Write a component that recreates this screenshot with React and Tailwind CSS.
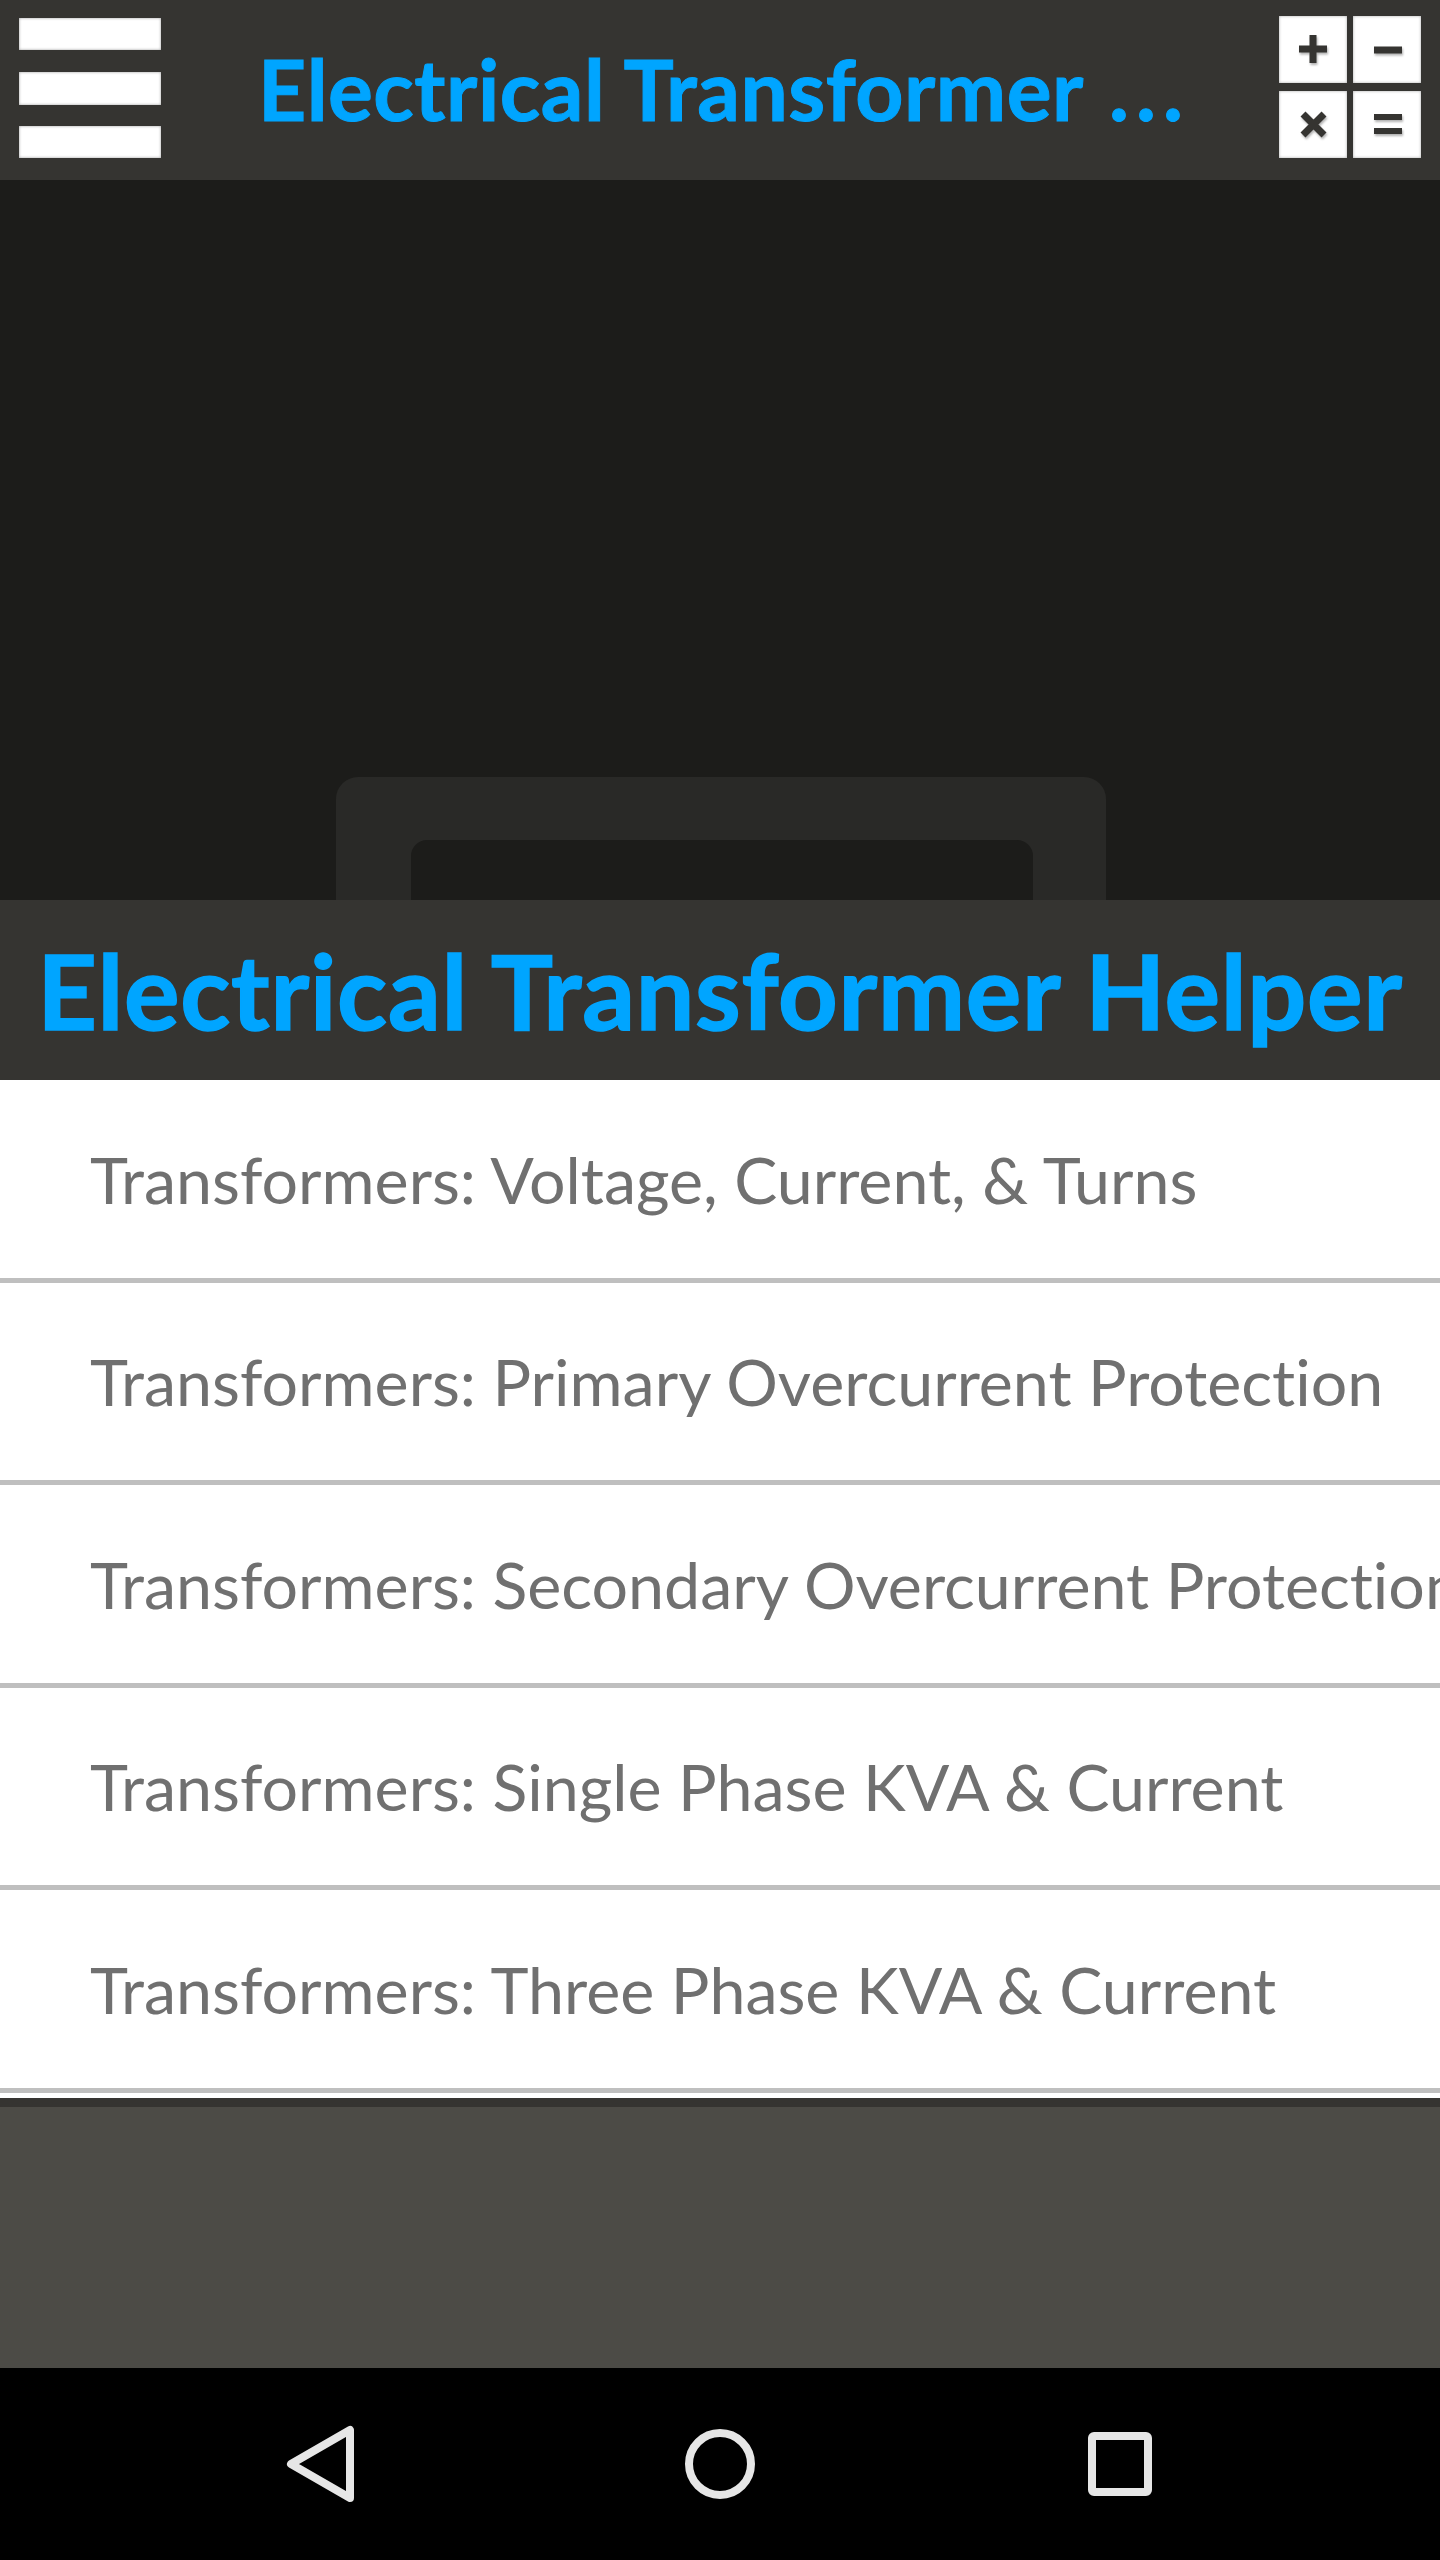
import React from 'react';

const rows = [
  'Transformers: Voltage, Current, & Turns',
  'Transformers: Primary Overcurrent Protection',
  'Transformers: Secondary Overcurrent Protection',
  'Transformers: Single Phase KVA & Current',
  'Transformers: Three Phase KVA & Current',
];

function CalcKey({ children }) {
  return (
    <div className="w-[68px] h-[67px] bg-white shadow-[inset_0_0_3px_rgba(0,0,0,0.35)]">
      <svg width="68" height="67" viewBox="0 0 68 67" className="drop-shadow-[1px_2px_1px_rgba(0,0,0,0.3)]" stroke="#353431" fill="none">
        {children}
      </svg>
    </div>
  );
}

export default function App() {
  return (
    <div className="w-[1440px] h-[2560px] flex flex-col overflow-hidden bg-[#4c4b46] font-['Lato',sans-serif] [font-variant-ligatures:none]">
      {/* Top bar */}
      <div className="h-[180px] shrink-0 flex items-center bg-[#353431] pl-[19px] pr-[19px]">
        <div className="flex flex-col gap-[21.5px] w-[142px] -mt-[4px]">
          <div className="h-[32px] bg-white shadow-[inset_0_0_3px_rgba(0,0,0,0.4)]" />
          <div className="h-[33px] bg-white shadow-[inset_0_0_3px_rgba(0,0,0,0.4)]" />
          <div className="h-[32px] bg-white shadow-[inset_0_0_3px_rgba(0,0,0,0.4)]" />
        </div>
        <div className="ml-[97px] flex-1 whitespace-nowrap font-bold text-[#00a5ff] text-[84px] tracking-[0.5px] leading-none -mt-[2px] [-webkit-text-stroke:1px_#00a5ff]">
          Electrical Transformer <span className="ml-[6px] tracking-[7px]">...</span>
        </div>
        <div className="grid grid-cols-[68px_68px] grid-rows-[67px_67px] gap-x-[6px] gap-y-[8px] -mt-[6px]">
          <CalcKey>
            <path d="M20 33H48M34 19V47" strokeWidth="7" />
          </CalcKey>
          <CalcKey>
            <path d="M21 34H49" strokeWidth="7" />
          </CalcKey>
          <CalcKey>
            <path d="M24 23L45 44M45 23L24 44" strokeWidth="7" />
          </CalcKey>
          <CalcKey>
            <path d="M21 26H49M21 40H49" strokeWidth="6" />
          </CalcKey>
        </div>
      </div>

      {/* Hero */}
      <div className="h-[720px] shrink-0 overflow-hidden bg-[#1c1c1a] flex justify-center pt-[597px] pl-[1px]">
        <div className="w-[770px] h-[300px] shrink-0 rounded-t-[22px] bg-[#292927] flex justify-center pt-[63px] pl-[3px]">
          <div className="w-[622px] h-[200px] rounded-t-[16px] bg-[#1c1c1a]" />
        </div>
      </div>

      {/* Title */}
      <div className="h-[180px] shrink-0 flex items-center justify-center bg-[#353431]">
        <h1 className="whitespace-nowrap font-bold text-[#00a5ff] text-[104px] tracking-[0.7px] leading-none [-webkit-text-stroke:1.5px_#00a5ff]">
          Electrical Transformer Helper
        </h1>
      </div>

      {/* List */}
      <div className="shrink-0 bg-white">
        {rows.map((row) => (
          <div
            key={row}
            className="h-[202.5px] flex items-center overflow-hidden border-b-[5px] border-[#bfbfbf] pl-[90px]"
          >
            <span className="whitespace-nowrap text-[64.5px] leading-none text-[#707070]">{row}</span>
          </div>
        ))}
      </div>
      <div className="h-[5px] shrink-0 bg-white" />
      <div className="h-[9px] shrink-0 bg-[#353431]" />

      {/* Empty area */}
      <div className="flex-1 bg-[#4c4b46]" />

      {/* Android nav bar */}
      <div className="h-[192px] shrink-0 bg-black flex items-center justify-center gap-[320px]">
        <svg width="80" height="80" viewBox="0 0 80 80" fill="none" stroke="#e6e6e6" strokeWidth="8" strokeLinejoin="round" className="-translate-x-[1px]">
          <path d="M12 40L71 6V74Z" />
        </svg>
        <svg width="80" height="80" viewBox="0 0 80 80" fill="none" stroke="#e6e6e6" strokeWidth="8">
          <circle cx="40" cy="40" r="31" />
        </svg>
        <svg width="80" height="80" viewBox="0 0 80 80" fill="none" stroke="#e6e6e6" strokeWidth="8" strokeLinejoin="round">
          <rect x="12" y="12" width="56" height="56" rx="2" />
        </svg>
      </div>
    </div>
  );
}
